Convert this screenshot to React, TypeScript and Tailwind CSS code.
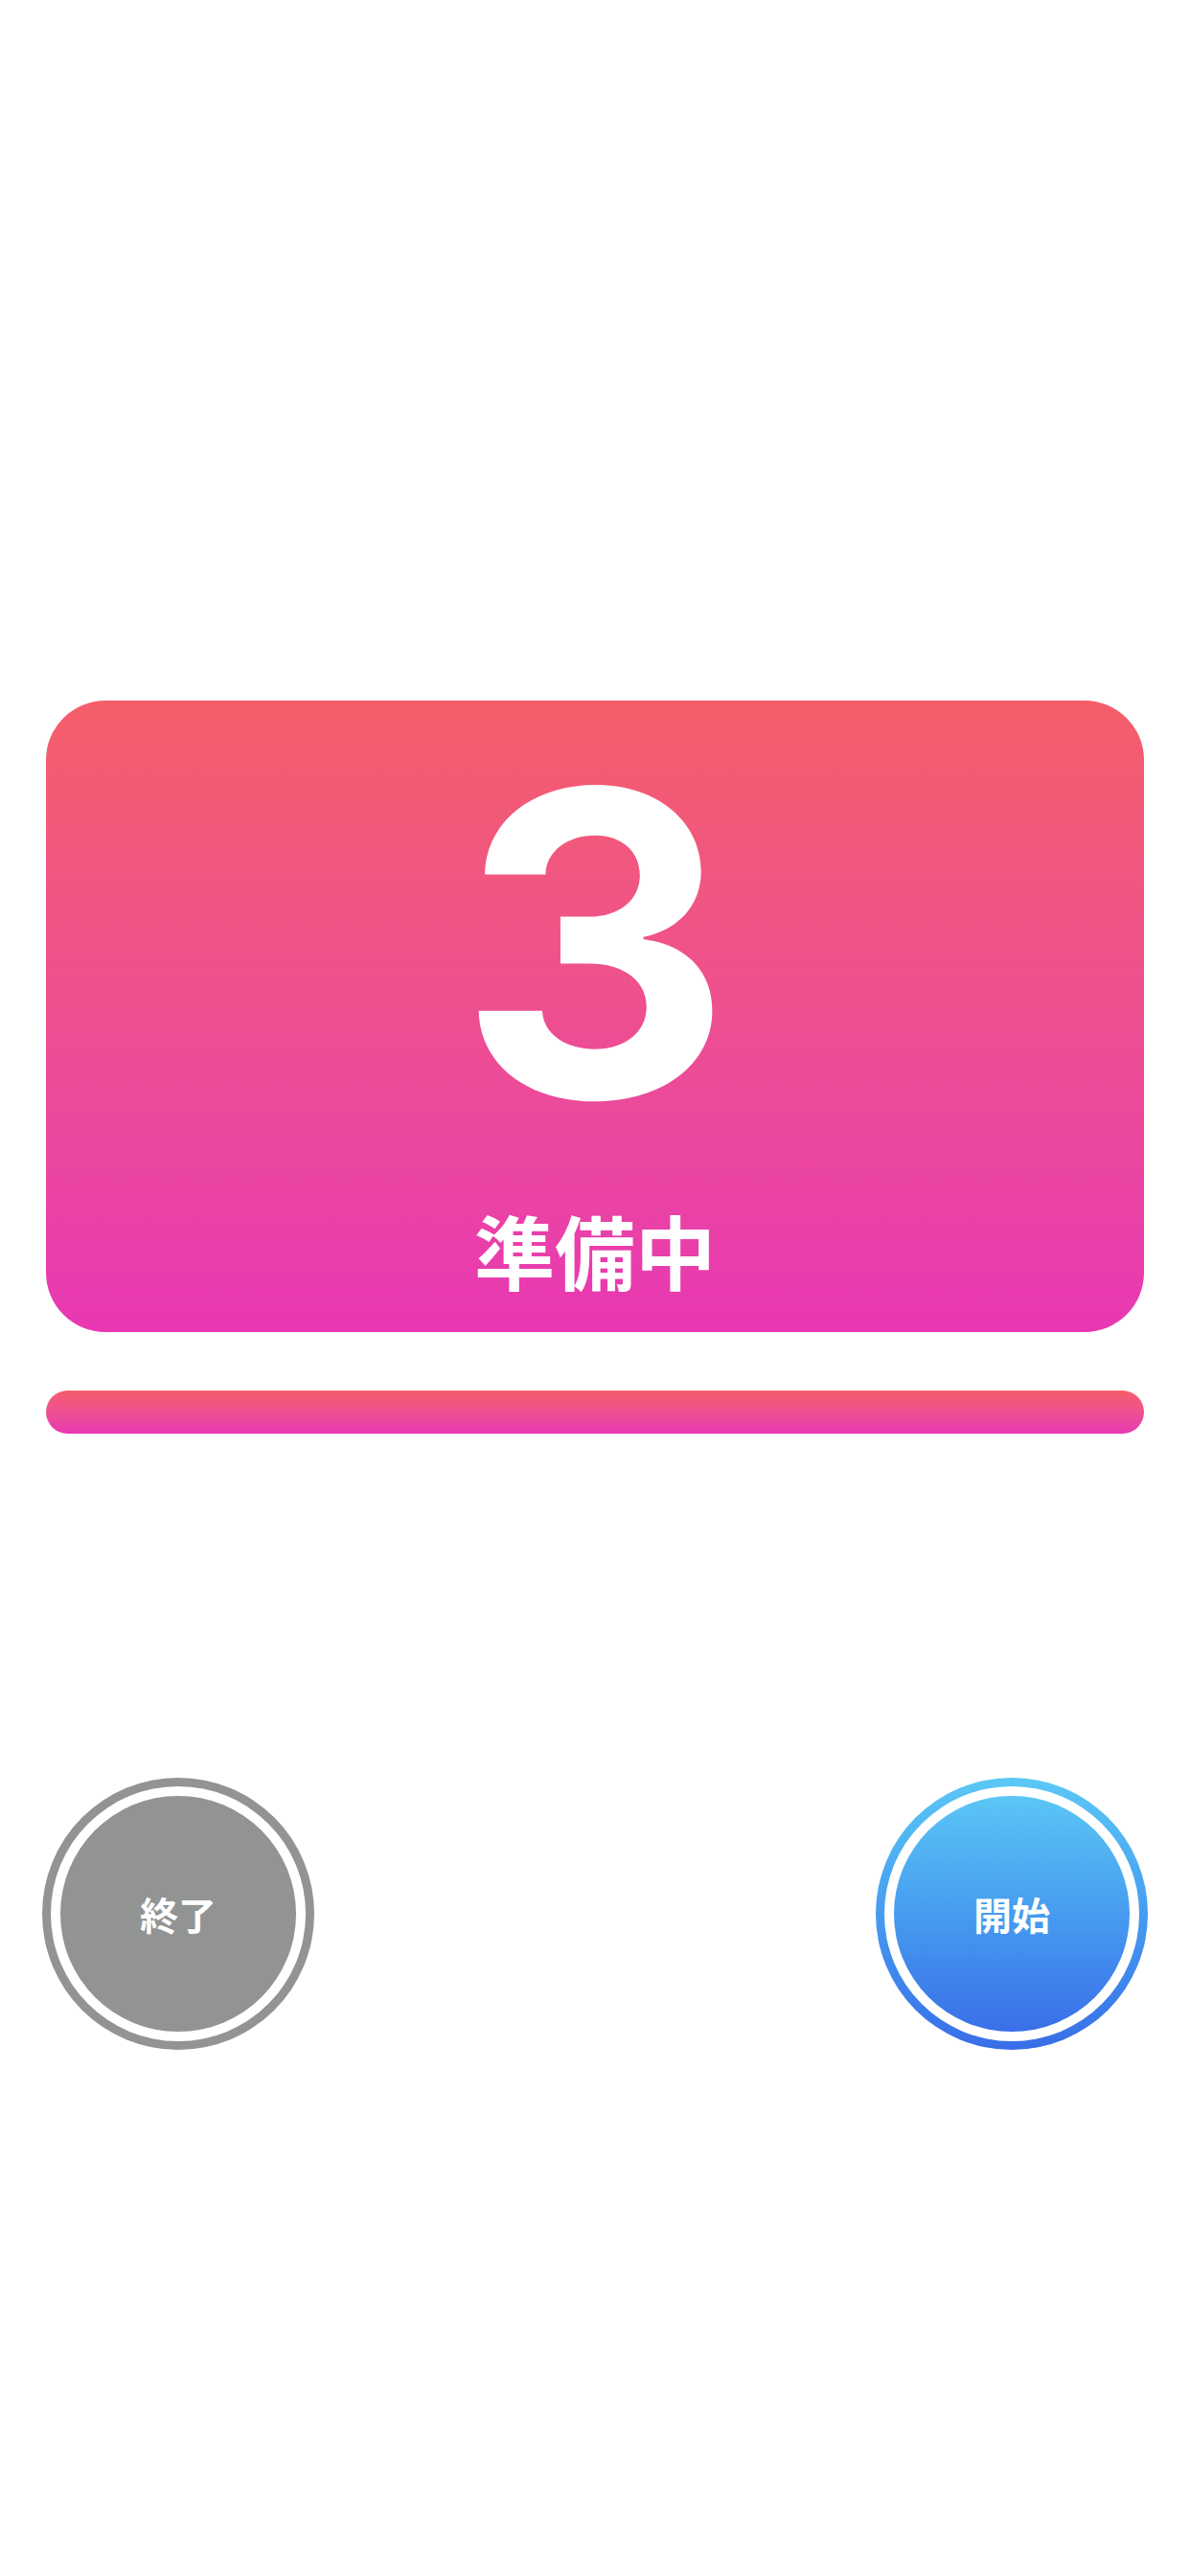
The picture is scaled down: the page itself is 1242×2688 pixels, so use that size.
export default function App() {
  return (
    <div className="min-h-[2688px] w-full bg-white flex flex-col pt-[731px]">
      {/* Countdown card */}
      <div className="mx-[48px] h-[659px] rounded-[62px] bg-gradient-to-b from-[#f45e69] to-[#e837b3] flex flex-col items-center text-white">
        <div
          className="mt-[77px] text-[442px] leading-[0.8] font-bold"
          style={{ fontFamily: 'Inter, "Noto Sans", sans-serif' }}
        >
          3
        </div>
        <div
          className="mt-[100px] text-[84px] leading-[1] font-bold"
          style={{ fontFamily: '"Noto Sans CJK JP", sans-serif' }}
        >
          準備中
        </div>
      </div>

      {/* Progress bar */}
      <div className="mx-[48px] mt-[61px] h-[45px] rounded-full bg-gradient-to-b from-[#f45e69] to-[#e837b3]" />

      {/* Buttons */}
      <div className="mt-[359px] px-[44px] flex justify-between">
        <button className="w-[284px] h-[284px] rounded-full bg-[#929493] p-[9px]">
          <div className="w-full h-full rounded-full bg-white p-[10px]">
            <div
              className="w-full h-full rounded-full bg-[#929493] flex items-center justify-center text-white text-[40px] font-bold"
              style={{ fontFamily: '"Noto Sans CJK JP", sans-serif' }}
            >
              終了
            </div>
          </div>
        </button>
        <button className="w-[284px] h-[284px] rounded-full bg-gradient-to-b from-[#5bc8f5] to-[#396de8] p-[9px]">
          <div className="w-full h-full rounded-full bg-white p-[10px]">
            <div
              className="w-full h-full rounded-full bg-gradient-to-b from-[#5bc6f5] to-[#3a6fe8] flex items-center justify-center text-white text-[40px] font-bold"
              style={{ fontFamily: '"Noto Sans CJK JP", sans-serif' }}
            >
              開始
            </div>
          </div>
        </button>
      </div>
    </div>
  );
}
